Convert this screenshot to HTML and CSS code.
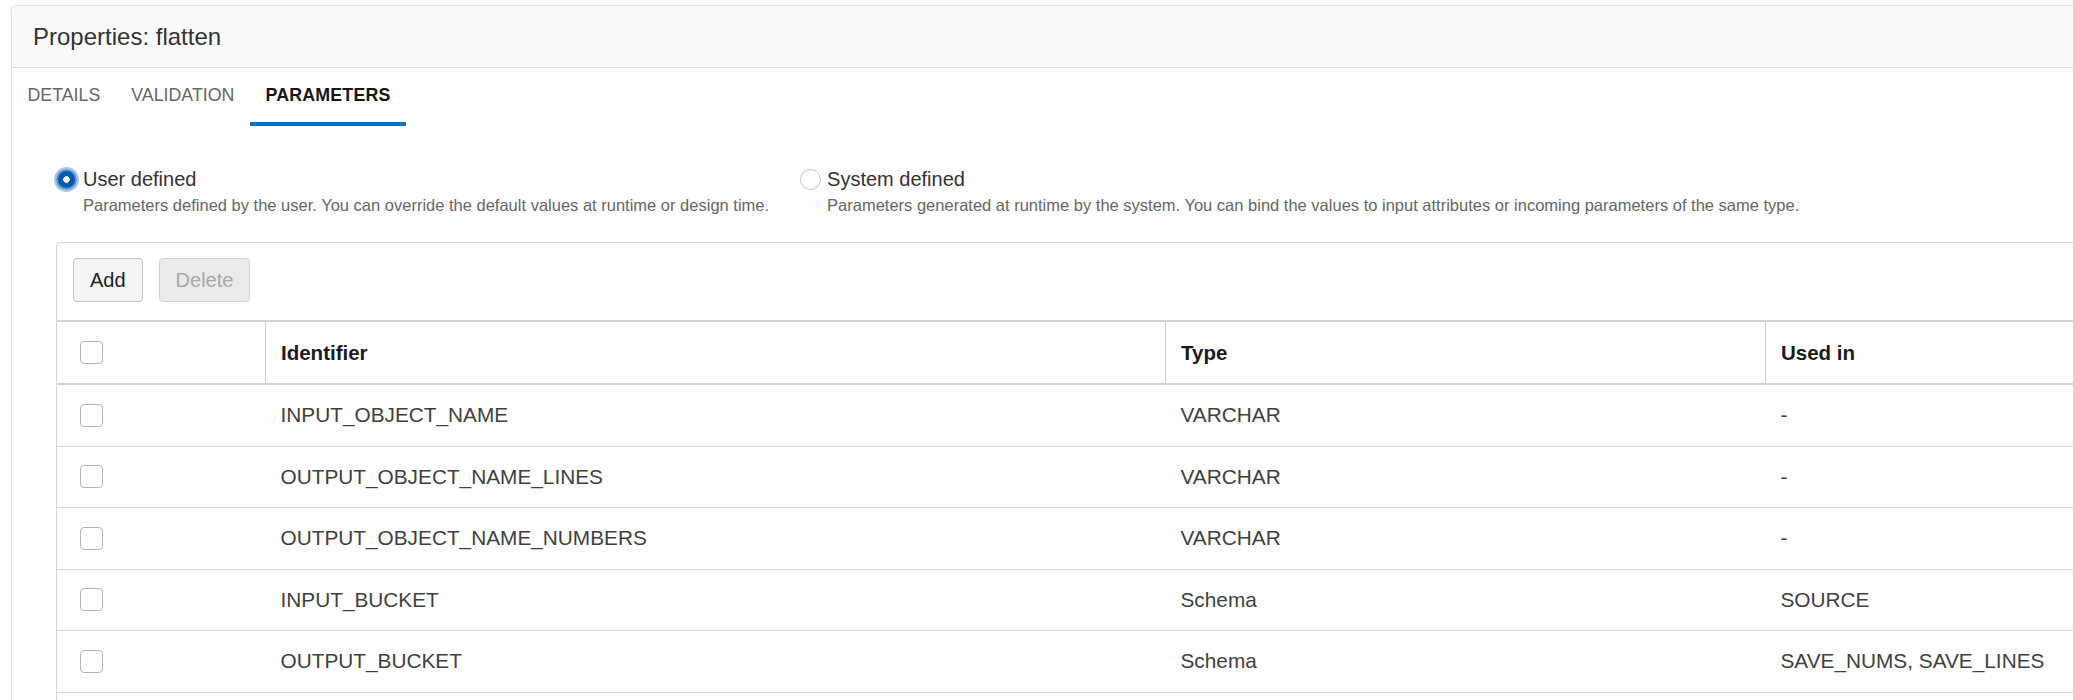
FILE: index.html
```html
<!DOCTYPE html>
<html lang="en">
<head>
<meta charset="utf-8">
<title>Properties: flatten</title>
<link rel="stylesheet" href="styles.css">
</head>
<body>
<div class="panel">
  <div class="panel-header">
    <h1 class="panel-title">Properties: flatten</h1>
  </div>
  <div class="tabs">
    <div class="tab">DETAILS</div>
    <div class="tab">VALIDATION</div>
    <div class="tab tab-active">PARAMETERS</div>
  </div>
  <div class="content">
    <div class="radio-row">
      <div class="radio-group">
        <div class="radio-line">
          <span class="radio radio-checked"></span>
          <span class="radio-label">User defined</span>
        </div>
        <div class="radio-desc">Parameters defined by the user. You can override the default values at runtime or design time.</div>
      </div>
      <div class="radio-group">
        <div class="radio-line">
          <span class="radio"></span>
          <span class="radio-label">System defined</span>
        </div>
        <div class="radio-desc">Parameters generated at runtime by the system. You can bind the values to input attributes or incoming parameters of the same type.</div>
      </div>
    </div>
    <div class="table-box">
      <div class="toolbar">
        <button class="btn">Add</button>
        <button class="btn btn-disabled">Delete</button>
      </div>
      <table class="grid">
        <thead>
          <tr>
            <th class="col-check"><span class="checkbox"></span></th>
            <th class="col-id">Identifier</th>
            <th class="col-type">Type</th>
            <th class="col-used">Used in</th>
          </tr>
        </thead>
        <tbody>
          <tr>
            <td class="col-check"><span class="checkbox"></span></td>
            <td>INPUT_OBJECT_NAME</td>
            <td>VARCHAR</td>
            <td>-</td>
          </tr>
          <tr>
            <td class="col-check"><span class="checkbox"></span></td>
            <td>OUTPUT_OBJECT_NAME_LINES</td>
            <td>VARCHAR</td>
            <td>-</td>
          </tr>
          <tr>
            <td class="col-check"><span class="checkbox"></span></td>
            <td>OUTPUT_OBJECT_NAME_NUMBERS</td>
            <td>VARCHAR</td>
            <td>-</td>
          </tr>
          <tr>
            <td class="col-check"><span class="checkbox"></span></td>
            <td>INPUT_BUCKET</td>
            <td>Schema</td>
            <td>SOURCE</td>
          </tr>
          <tr>
            <td class="col-check"><span class="checkbox"></span></td>
            <td>OUTPUT_BUCKET</td>
            <td>Schema</td>
            <td>SAVE_NUMS, SAVE_LINES</td>
          </tr>
        </tbody>
      </table>
    </div>
  </div>
</div>
</body>
</html>
```
FILE: styles.css
```css
html, body {
  margin: 0;
  padding: 0;
  overflow: hidden;
  background: #ffffff;
}
body {
  font-family: "Liberation Sans", Arial, sans-serif;
  color: #333333;
}
.panel {
  margin: 5px 0 0 11px;
  width: 2300px;
  min-height: 760px;
  border: 1px solid #e1e1e1;
  border-right: none;
  border-radius: 6px 0 0 0;
  box-sizing: border-box;
  background: #ffffff;
}
.panel-header {
  height: 61px;
  background: #fafafa;
  border-bottom: 1px solid #dedede;
  border-radius: 6px 0 0 0;
  display: flex;
  align-items: center;
  padding-left: 21px;
}
.panel-title {
  margin: 0;
  font-size: 24px;
  font-weight: normal;
  color: #333333;
}
.tabs {
  display: flex;
  height: 58px;
}
.tab {
  box-sizing: border-box;
  height: 58px;
  padding: 0 15.5px;
  display: flex;
  align-items: center;
  font-size: 17.8px;
  color: #666666;
  border-bottom: 4px solid transparent;
}
.tab-active {
  color: #161616;
  font-weight: bold;
  letter-spacing: 0.2px;
  border-bottom-color: #0572ce;
}
.content {
  padding: 40px 0 0 44px;
}
.radio-row {
  display: flex;
}
.radio-group {
  margin-right: 31px;
}
.radio-line {
  display: flex;
  align-items: center;
  height: 26px;
}
.radio {
  box-sizing: border-box;
  width: 21px;
  height: 21px;
  border-radius: 50%;
  border: 1px solid #c2c2c2;
  background: #ffffff;
  flex: none;
}
.radio-checked {
  border: 2px solid #5d96d6;
  background: radial-gradient(circle, #ffffff 0 3px, #0d5aa6 3.6px);
  box-shadow: 0 0 0 2px rgba(110, 160, 220, 0.6);
}
.radio-label {
  margin-left: 6px;
  font-size: 20px;
  color: #333333;
}
.radio-desc {
  margin: 3px 0 0 27px;
  font-size: 16.5px;
  line-height: 20px;
  color: #666666;
  white-space: nowrap;
}
.table-box {
  margin-top: 27px;
  border: 1px solid #d4d4d4;
  border-right: none;
  border-radius: 5px 0 0 0;
  padding-bottom: 40px;
}
.toolbar {
  display: flex;
  gap: 16px;
  padding: 15px 16px 18px;
}
.btn {
  box-sizing: border-box;
  height: 44px;
  padding: 0 16px;
  font-family: "Liberation Sans", Arial, sans-serif;
  font-size: 20px;
  color: #222222;
  background: #f5f5f5;
  border: 1px solid #c4c4c4;
  border-radius: 4px;
}
.btn-disabled {
  background: #ebebeb;
  border-color: #d2d2d2;
  color: #a8a8a8;
}
.grid {
  border-collapse: collapse;
  table-layout: fixed;
  width: 2000px;
}
.grid th, .grid td {
  text-align: left;
  padding: 0 0 0 15px;
  white-space: nowrap;
}
.grid th {
  height: 61px;
  font-size: 20.5px;
  font-weight: bold;
  color: #1b1b1b;
  border-top: 2px solid #d2d2d2;
  border-bottom: 2px solid #d2d2d2;
}
.grid th + th {
  border-left: 1px solid #cfcfcf;
}
.grid td {
  height: 60.5px;
  font-size: 20.8px;
  color: #3f3f3f;
  border-bottom: 1px solid #d8d8d8;
}
.grid .col-check {
  width: 185px;
  padding-left: 23px;
  font-size: 0;
}
.grid .col-id { width: 884px; }
.grid .col-type { width: 584px; }
.grid .col-used { width: 300px; }
.checkbox {
  display: inline-block;
  box-sizing: border-box;
  width: 23px;
  height: 23px;
  border: 1px solid #b5b5b5;
  border-radius: 4px;
  background: #ffffff;
  vertical-align: middle;
}
```
